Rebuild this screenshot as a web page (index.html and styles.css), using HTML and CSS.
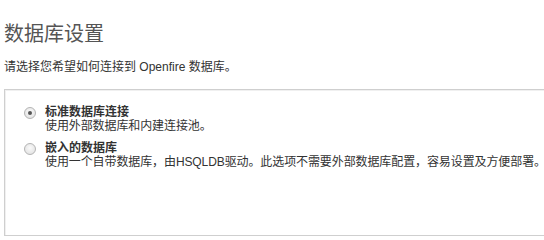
FILE: index.html
```html
<!DOCTYPE html>
<html lang="zh-CN">
<head>
<meta charset="utf-8">
<title>数据库设置</title>
<link rel="stylesheet" href="styles.css">
</head>
<body>
<h1 class="title">数据库设置</h1>
<p class="intro">请选择您希望如何连接到 Openfire 数据库。</p>
<div class="box">
  <div class="option">
    <span class="radio checked"></span>
    <div class="option-text">
      <div class="option-label">标准数据库连接</div>
      <div class="option-desc">使用外部数据库和内建连接池。</div>
    </div>
  </div>
  <div class="option">
    <span class="radio"></span>
    <div class="option-text">
      <div class="option-label">嵌入的数据库</div>
      <div class="option-desc">使用一个自带数据库，由HSQLDB驱动。此选项不需要外部数据库配置，容易设置及方便部署。</div>
    </div>
  </div>
</div>
</body>
</html>
```

FILE: styles.css
```css
html, body {
  margin: 0;
  background: #fff;
}
body {
  padding: 0 0 0 4px;
  font-family: "Liberation Sans", "Noto Sans CJK SC", sans-serif;
  font-size: 12px;
  color: #333;
}
.title {
  margin: 0;
  padding-top: 22px;
  font-size: 20px;
  line-height: 24px;
  font-weight: normal;
  color: #555;
}
.intro {
  margin: 14px 0 0 0;
  line-height: 14px;
}
.box {
  margin-top: 15px;
  height: 130px;
  border: 1px solid #cfcfcf;
  border-right: none;
  box-shadow: inset 1px 1px 0 #f0f0f0;
  padding: 15px 0 0 19px;
}
.option {
  display: flex;
  align-items: flex-start;
  gap: 9px;
  margin-bottom: 8px;
}
.radio {
  flex: none;
  width: 10px;
  height: 10px;
  margin-top: 2px;
  border-radius: 50%;
  border: 1px solid #b4b4b4;
  background: radial-gradient(circle at 50% 40%, #fafafa 0%, #e6e6e6 70%, #d8d8d8 100%);
  position: relative;
}
.radio.checked::after {
  content: "";
  position: absolute;
  left: 3px;
  top: 3px;
  width: 4px;
  height: 4px;
  border-radius: 50%;
  background: #555;
}
.option-text {
  line-height: 14px;
  white-space: nowrap;
}
.option-label {
  font-weight: bold;
  color: #333;
}
.option-desc {
  color: #333;
  letter-spacing: -0.1px;
}
```
